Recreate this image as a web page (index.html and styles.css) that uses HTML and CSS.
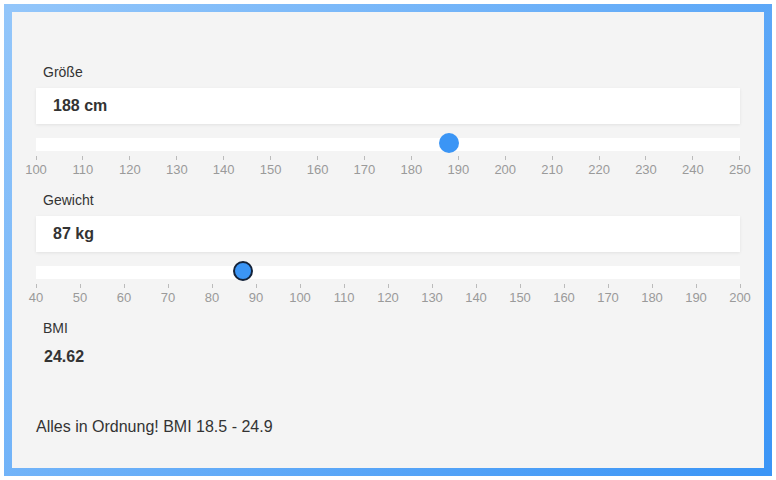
FILE: index.html
```html
<!DOCTYPE html>
<html lang="de">
<head>
    <meta charset="UTF-8">
    <meta name="viewport" content="width=device-width, initial-scale=1.0">
    <title>BMI Rechner</title>
    <link rel="stylesheet" href="styles.css">
</head>
<body>
    <div class="frame">
        <section class="field">
            <p class="field-label">Größe</p>
            <div class="field-input">188 cm</div>
            <div class="slider">
                <div class="track">
                    <span class="thumb" style="left: 58.67%"></span>
                </div>
                <div class="scale">
                    <span class="mark">100</span>
                    <span class="mark">110</span>
                    <span class="mark">120</span>
                    <span class="mark">130</span>
                    <span class="mark">140</span>
                    <span class="mark">150</span>
                    <span class="mark">160</span>
                    <span class="mark">170</span>
                    <span class="mark">180</span>
                    <span class="mark">190</span>
                    <span class="mark">200</span>
                    <span class="mark">210</span>
                    <span class="mark">220</span>
                    <span class="mark">230</span>
                    <span class="mark">240</span>
                    <span class="mark">250</span>
                </div>
            </div>
        </section>

        <section class="field">
            <p class="field-label">Gewicht</p>
            <div class="field-input">87 kg</div>
            <div class="slider">
                <div class="track">
                    <span class="thumb active" style="left: 29.375%"></span>
                </div>
                <div class="scale">
                    <span class="mark">40</span>
                    <span class="mark">50</span>
                    <span class="mark">60</span>
                    <span class="mark">70</span>
                    <span class="mark">80</span>
                    <span class="mark">90</span>
                    <span class="mark">100</span>
                    <span class="mark">110</span>
                    <span class="mark">120</span>
                    <span class="mark">130</span>
                    <span class="mark">140</span>
                    <span class="mark">150</span>
                    <span class="mark">160</span>
                    <span class="mark">170</span>
                    <span class="mark">180</span>
                    <span class="mark">190</span>
                    <span class="mark">200</span>
                </div>
            </div>
        </section>

        <section class="result">
            <p class="field-label">BMI</p>
            <p class="result-value">24.62</p>
        </section>

        <p class="message">Alles in Ordnung! BMI 18.5 - 24.9</p>
    </div>
</body>
</html>
```

FILE: styles.css
```css
* {
    margin: 0;
    padding: 0;
    box-sizing: border-box;
}

body {
    font-family: 'Liberation Sans', Arial, sans-serif;
    background-color: #fff;
    color: #333;
    padding: 4px;
}

.frame {
    width: 768px;
    height: 472px;
    background-color: #f4f4f4;
    border: 8px solid;
    border-image: linear-gradient(135deg, #93c6fa, #3b95f6) 1;
    padding: 52px 24px 0;
}

.field-label {
    font-size: 14px;
    line-height: 16px;
    padding-left: 7px;
    margin-bottom: 8px;
}

.field-input {
    background-color: #fff;
    height: 36px;
    line-height: 36px;
    padding-left: 17px;
    font-size: 16px;
    font-weight: bold;
    box-shadow: 0px 1px 3px rgba(0, 0, 0, 0.08);
}

.slider {
    margin-top: 14px;
}

.track {
    position: relative;
    height: 13px;
    background-color: #fff;
}

.thumb {
    position: absolute;
    top: 5px;
    width: 20px;
    height: 20px;
    border-radius: 50%;
    background-color: #3b95f5;
    transform: translate(-50%, -50%);
}

.thumb.active {
    border: 2px solid #14233a;
}

.scale {
    display: flex;
    justify-content: space-between;
    margin-top: 5px;
    height: 21px;
}

.mark {
    width: 0;
    display: flex;
    flex-direction: column;
    align-items: center;
    font-size: 13px;
    line-height: 15px;
    color: #9a9a9a;
    white-space: nowrap;
}

.mark::before {
    content: '';
    width: 1px;
    height: 4px;
    background-color: #bbb;
    margin-bottom: 2px;
}

.field + .field {
    margin-top: 15px;
}

.result {
    margin-top: 15px;
}

.result-value {
    font-size: 16px;
    line-height: 18px;
    font-weight: bold;
    padding-left: 8px;
    margin-top: 12px;
}

.message {
    font-size: 16px;
    line-height: 18px;
    margin-top: 52px;
}
```
